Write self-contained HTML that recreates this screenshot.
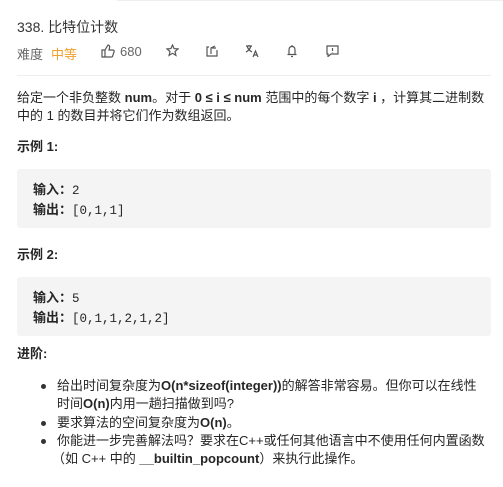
<!DOCTYPE html>
<html><head><meta charset="utf-8"><style>
body{margin:0;width:503px;height:487px;background:#fff;font-family:"Liberation Sans","Noto Sans CJK SC",sans-serif;color:#262626;position:relative;overflow:hidden}
.a{position:absolute;white-space:nowrap}
.t{font-size:13px;line-height:18px}
b{font-weight:bold}
.code{position:absolute;left:17px;width:474px;height:59px;background:#f4f4f4;border-radius:3px}
.code div{position:absolute;left:16px;font-size:13px;white-space:nowrap}
.mono{font-family:"Liberation Mono",monospace;font-size:12.5px}
svg{position:absolute;fill:none;stroke:#555;stroke-width:1.2}
.bul{position:absolute;left:41px;width:5px;height:5px;border-radius:3px;background:#333}
</style></head><body>
<div class="a" style="left:117px;top:0;width:386px;height:1px;background:#eee"></div>
<div class="a" style="left:17px;top:17px;font-size:14px;color:#333">338. 比特位计数</div>
<div class="a" style="left:17px;top:44px;font-size:13px;color:#666">难度</div>
<div class="a" style="left:51px;top:44px;font-size:13px;color:#f0a030">中等</div>
<svg style="left:101px;top:44px" width="14" height="14" viewBox="0 0 14 14"><path d="M1 6h3v7H1zM4 6l3-5c1 0 2 1 1.5 3L8 6h4c1 0 1.5 1 1 2l-1.5 4.5c-.3.5-.7.5-1 .5H4"/></svg>
<div class="a" style="left:120px;top:44px;font-size:13px;color:#666">680</div>
<svg style="left:166px;top:44px" width="13" height="13" viewBox="0 0 13 13"><path d="M6.5 1l1.6 3.6 3.9.3-3 2.6.9 3.9-3.4-2.1-3.4 2.1.9-3.9-3-2.6 3.9-.3z"/></svg>
<svg style="left:206px;top:45px" width="13" height="12" viewBox="0 0 13 12"><path d="M3 2H1v9h10V5M5 9V3l4-2M6 3h4"/></svg>
<svg style="left:245px;top:44px" width="14" height="14" viewBox="0 0 14 14"><path d="M1 2h6M4 1v1M2 2c1 3 3 5 5 6M6 2c-1 3-3 5-5 6M8 13l2.5-6 2.5 6M9 11h3"/></svg>
<svg style="left:286px;top:44px" width="12" height="14" viewBox="0 0 12 14"><path d="M6 1v1M3 10V6c0-2 1-3.5 3-3.5S9 4 9 6v4M1.5 10.5h9M5 12.5h2"/></svg>
<svg style="left:326px;top:45px" width="13" height="12" viewBox="0 0 13 12"><path d="M1 1h11v8H5l-3 2.5V9H1zM6.5 3v3M6.5 7v.5"/></svg>
<div class="a" style="left:17px;top:75px;width:474px;height:1px;background:#eee"></div>
<div class="a t" style="left:17px;top:89px">给定一个非负整数 <b>num</b>。对于 <b>0 ≤ i ≤ num</b> 范围中的每个数字 <b>i</b> ，计算其二进制数</div>
<div class="a t" style="left:17px;top:107px">中的 1 的数目并将它们作为数组返回。</div>
<div class="a t" style="left:17px;top:138px"><b>示例 1:</b></div>
<div class="code" style="top:169px"><div style="top:10px"><b>输入：</b><span class="mono">2</span></div><div style="top:30px"><b>输出：</b><span class="mono">[0,1,1]</span></div></div>
<div class="a t" style="left:17px;top:246px"><b>示例 2:</b></div>
<div class="code" style="top:277px"><div style="top:10px"><b>输入：</b><span class="mono">5</span></div><div style="top:30px"><b>输出：</b><span class="mono">[0,1,1,2,1,2]</span></div></div>
<div class="a t" style="left:17px;top:345px"><b>进阶:</b></div>
<div class="bul" style="top:384px"></div>
<div class="a t" style="left:57px;top:377px">给出时间复杂度为<b>O(n*sizeof(integer))</b>的解答非常容易。但你可以在线性</div>
<div class="a t" style="left:57px;top:395px">时间<b>O(n)</b>内用一趟扫描做到吗?</div>
<div class="bul" style="top:421px"></div>
<div class="a t" style="left:57px;top:414px">要求算法的空间复杂度为<b>O(n)</b>。</div>
<div class="bul" style="top:439px"></div>
<div class="a t" style="left:57px;top:432px">你能进一步完善解法吗？要求在C++或任何其他语言中不使用任何内置函数</div>
<div class="a t" style="left:52px;top:450px">（如 C++ 中的 <b>__builtin_popcount</b>）来执行此操作。</div>
</body></html>
